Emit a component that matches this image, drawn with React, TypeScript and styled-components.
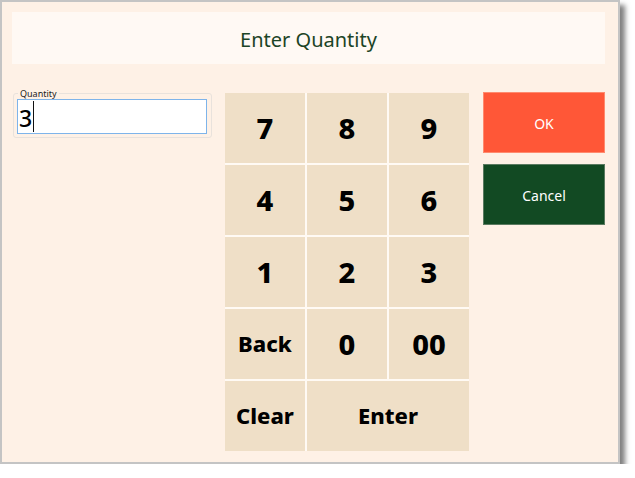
import styled, { createGlobalStyle } from 'styled-components'

const GlobalStyle = createGlobalStyle`
  html, body {
    margin: 0;
    padding: 0;
    background: #ffffff;
  }
  body {
    font-family: 'Noto Sans', 'Open Sans', sans-serif;
  }
`

type KeyDef = { label: string; span?: number; word?: boolean }

const KEYS: KeyDef[] = [
  { label: '7' },
  { label: '8' },
  { label: '9' },
  { label: '4' },
  { label: '5' },
  { label: '6' },
  { label: '1' },
  { label: '2' },
  { label: '3' },
  { label: 'Back', word: true },
  { label: '0' },
  { label: '00' },
  { label: 'Clear', word: true },
  { label: 'Enter', span: 2, word: true },
]

export default function App() {
  return (
    <>
      <GlobalStyle />
      <StyledWindow>
        <StyledHeader>Enter Quantity</StyledHeader>
        <StyledBody>
          <StyledQuantityGroup>
            <StyledGroupLabel>Quantity</StyledGroupLabel>
            <StyledTextBox>
              3<StyledCaret />
            </StyledTextBox>
          </StyledQuantityGroup>

          <StyledKeypad>
            {KEYS.map((k) => (
              <StyledKey key={k.label} span={k.span} word={k.word}>
                {k.label}
              </StyledKey>
            ))}
          </StyledKeypad>

          <StyledActions>
            <StyledActionButton variant="ok">OK</StyledActionButton>
            <StyledActionButton variant="cancel">Cancel</StyledActionButton>
          </StyledActions>
        </StyledBody>
      </StyledWindow>
    </>
  )
}

const StyledWindow = styled.div`
  width: 616px;
  height: 460px;
  background: #fef1e6;
  border: 2px solid #c4c4c4;
  box-shadow: 5px 5px 5px rgba(0, 0, 0, 0.5);
  display: flex;
  flex-direction: column;
`

const StyledHeader = styled.div`
  margin: 10px 13px 0 10px;
  height: 52px;
  padding-top: 2px;
  box-sizing: border-box;
  background: #fff9f4;
  display: flex;
  align-items: center;
  justify-content: center;
  font-size: 20px;
  color: #1c4426;
`

const StyledBody = styled.div`
  display: flex;
  align-items: flex-start;
  margin-top: 28px;
  padding-left: 11px;
`

const StyledQuantityGroup = styled.div`
  position: relative;
  width: 199px;
  height: 45px;
  margin-top: 1px;
  box-sizing: border-box;
  border: 1px solid #e9e2dc;
  border-radius: 3px;
  padding: 5px 4px 0 3px;
`

const StyledGroupLabel = styled.span`
  position: absolute;
  top: -5px;
  left: 4px;
  padding: 0 2px;
  background: #fef1e6;
  font-size: 9px;
  line-height: 10px;
  color: #222;
`

const StyledTextBox = styled.div`
  height: 35px;
  box-sizing: border-box;
  border: 1px solid #7eb4ea;
  background: #ffffff;
  display: flex;
  align-items: center;
  padding: 2px 0 0 1px;
  font-size: 23px;
  font-weight: 500;
  color: #000;
`

const StyledCaret = styled.span`
  display: inline-block;
  width: 1px;
  height: 31px;
  margin: -2px 0 0 1px;
  background: #111;
`

const StyledKeypad = styled.div`
  margin-left: 13px;
  margin-top: 1px;
  display: grid;
  grid-template-columns: repeat(3, 80px);
  grid-auto-rows: 70px;
  gap: 2px;
  background: #fffaf4;
`

const StyledKey = styled.div<{ span?: number; word?: boolean }>`
  grid-column: span ${(p) => p.span ?? 1};
  background: #efdfc7;
  display: flex;
  align-items: center;
  justify-content: center;
  padding-bottom: ${(p) => (p.word ? '3px' : '1px')};
  font-weight: 800;
  font-size: ${(p) => (p.word ? '22px' : '29px')};
  color: #000;
`

const StyledActions = styled.div`
  margin-left: 14px;
  width: 122px;
  display: flex;
  flex-direction: column;
  gap: 11px;
`

const StyledActionButton = styled.div<{ variant: 'ok' | 'cancel' }>`
  height: 61px;
  box-sizing: border-box;
  padding-top: 2px;
  display: flex;
  align-items: center;
  justify-content: center;
  font-size: 14px;
  color: #ffffff;
  background: ${(p) => (p.variant === 'ok' ? '#ff5737' : '#124a23')};
  border: 1px solid ${(p) => (p.variant === 'ok' ? '#ff8a6e' : '#5a7a60')};
`
